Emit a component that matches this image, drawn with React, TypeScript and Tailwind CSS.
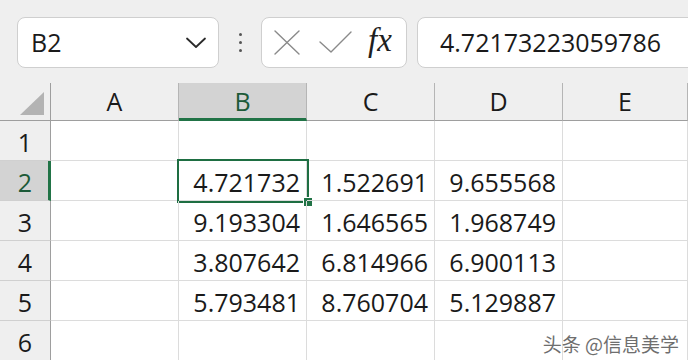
import React from "react";

const COLS = ["A", "B", "C", "D", "E"];

const ROWS: string[][] = [
  ["", "", "", "", ""],
  ["", "4.721732", "1.522691", "9.655568", ""],
  ["", "9.193304", "1.646565", "1.968749", ""],
  ["", "3.807642", "6.814966", "6.900113", ""],
  ["", "5.793481", "8.760704", "5.129887", ""],
  ["", "", "", "", ""],
];

function Chevron() {
  return (
    <svg width="22" height="12" viewBox="0 0 22 12" fill="none">
      <path d="M2 1.5 L11 10 L20 1.5" stroke="#2a2a2a" strokeWidth="1.8" strokeLinecap="round" strokeLinejoin="round" />
    </svg>
  );
}

function CancelIcon() {
  return (
    <svg width="26" height="25" viewBox="0 0 26 25" fill="none">
      <path d="M1 1 L25 24 M25 1 L1 24" stroke="#8a8a8a" strokeWidth="1.4" strokeLinecap="round" />
    </svg>
  );
}

function CheckIcon() {
  return (
    <svg width="34" height="24" viewBox="0 0 34 24" fill="none">
      <path d="M1 12 L12 22 L32 2" stroke="#8a8a8a" strokeWidth="1.4" strokeLinecap="round" strokeLinejoin="round" />
    </svg>
  );
}

export default function App() {
  return (
    <div
      className="relative w-[688px] h-[360px] overflow-hidden bg-white text-[#1a1a1a]"
      style={{ fontFamily: '"Open Sans", "Noto Sans", "Noto Sans CJK SC", sans-serif' }}
    >
      {/* formula bar */}
      <div className="flex h-[83px] items-start bg-[#efefef] pl-[17px] pt-[17px]">
        <div className="flex h-[51px] w-[202px] shrink-0 items-center justify-between rounded-[8px] border border-[#cfcfcf] bg-white pl-[13px] pr-[11px]">
          <span className="text-[25px] leading-none">B2</span>
          <Chevron />
        </div>
        <div className="flex h-[51px] w-[42px] shrink-0 flex-col items-center justify-center gap-[5px] pl-[1px]">
          <span className="h-[3px] w-[3px] rounded-full bg-[#555]" />
          <span className="h-[3px] w-[3px] rounded-full bg-[#555]" />
          <span className="h-[3px] w-[3px] rounded-full bg-[#555]" />
        </div>
        <div className="flex h-[51px] w-[146px] shrink-0 items-center rounded-[8px] border border-[#cfcfcf] bg-white pl-[12px]">
          <CancelIcon />
          <span className="ml-[19px] mt-[-2px]">
            <CheckIcon />
          </span>
          <span
            className="ml-[15px] mt-[-4px] text-[33px] italic leading-none text-[#1f1f1f]"
            style={{ fontFamily: '"Liberation Serif", serif' }}
          >
            fx
          </span>
        </div>
        <div className="ml-[10px] flex h-[51px] w-[300px] shrink-0 items-center rounded-[8px] border border-[#cfcfcf] bg-white pl-[22px]">
          <span className="text-[25px] leading-none">4.72173223059786</span>
        </div>
      </div>

      {/* sheet grid */}
      <div className="grid grid-cols-[51px_128px_128px_128px_128px_1fr]">
        {/* header row */}
        <div className="flex h-[38px] items-end justify-end border-b border-r border-[#9e9e9e] bg-[#efefef] pb-[5px] pr-[6px]">
          <svg width="24" height="23" viewBox="0 0 24 23">
            <polygon points="24,0 24,23 0,23" fill="#b3b3b3" />
          </svg>
        </div>
        {COLS.map((c) =>
          c === "B" ? (
            <div
              key={c}
              className="flex h-[38px] items-center justify-center border-b-[3px] border-r border-b-[#217346] border-r-[#b5b5b5] bg-[#d3d3d3] pt-[2px] text-[25px] text-[#1c5a38]"
            >
              {c}
            </div>
          ) : (
            <div
              key={c}
              className="flex h-[38px] items-center justify-center border-b border-r border-b-[#9e9e9e] border-r-[#b5b5b5] bg-[#efefef] text-[25px]"
            >
              {c}
            </div>
          )
        )}

        {ROWS.map((row, ri) => (
          <React.Fragment key={ri}>
            {ri === 1 ? (
              <div className="flex h-[40px] items-center justify-center border-b border-r-[3px] border-b-[#cfcfcf] border-r-[#217346] bg-[#d3d3d3] pt-[4px] pl-[2px] text-[25px] text-[#1c5a38]">
                {ri + 1}
              </div>
            ) : (
              <div className="flex h-[40px] items-center justify-center border-b border-r border-b-[#d0d0d0] border-r-[#9e9e9e] bg-[#efefef] pt-[4px] text-[25px]">
                {ri + 1}
              </div>
            )}
            {row.map((v, ci) => (
              <div
                key={ci}
                className="relative flex h-[40px] items-center justify-end border-b border-r border-[#dcdcdc] pr-[6px] pt-[4px] text-[25px]"
              >
                {v}
                {ri === 1 && ci === 1 && (
                  <div className="pointer-events-none absolute left-[-2px] top-[-2px] h-[44px] w-[132px] border-2 border-[#1e6e42]">
                    <div className="absolute bottom-[-6px] right-[-6px] h-[10px] w-[10px] border border-white bg-[#217346]" />
                  </div>
                )}
              </div>
            ))}
          </React.Fragment>
        ))}
      </div>

      {/* watermark */}
      <div
        className="absolute bottom-[7px] right-[9px] text-[19px] leading-none text-[#6e6e6e] [text-shadow:0_0_2px_#ffffff,0_0_1px_#ffffff]"
        style={{ fontFamily: '"Noto Sans CJK SC", sans-serif' }}
      >
        头条 @信息美学
      </div>
    </div>
  );
}
